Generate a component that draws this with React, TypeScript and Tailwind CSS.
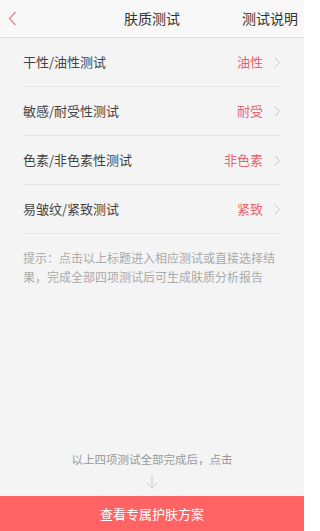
import React from "react";

const rows = [
  { label: "干性/油性测试", value: "油性" },
  { label: "敏感/耐受性测试", value: "耐受" },
  { label: "色素/非色素性测试", value: "非色素" },
  { label: "易皱纹/紧致测试", value: "紧致" },
];

function Chevron() {
  return (
    <svg width="7" height="11" viewBox="0 0 7 11" className="ml-[11px]">
      <path d="M1 1l4.5 4.5L1 10" fill="none" stroke="#c4c4c4" strokeWidth="1" />
    </svg>
  );
}

export default function App() {
  return (
    <div
      className="flex h-[531px] w-[304px] flex-col overflow-hidden bg-[#f4f4f4]"
      style={{ fontFamily: '"Noto Sans CJK SC", "Noto Sans", sans-serif' }}
    >
      <header className="relative flex h-[38px] shrink-0 items-center border-b border-[#dedede] bg-[#f8f8f8]">
        <svg width="9" height="15" viewBox="0 0 9 15" className="ml-[8px]">
          <path d="M7.5 1L1.5 7.5l6 6.5" fill="none" stroke="#e57c88" strokeWidth="1.2" />
        </svg>
        <div className="absolute left-1/2 -translate-x-1/2 text-[14px] text-[#333]">肤质测试</div>
        <div className="ml-auto pr-[6px] text-[14px] text-[#333]">测试说明</div>
      </header>

      <div className="px-[23px]">
        {rows.map((r) => (
          <div key={r.label} className="flex h-[49px] items-center border-b border-[#e6e6e6]">
            <span className="text-[13px] text-[#444]">{r.label}</span>
            <span className="ml-auto text-[13px] text-[#e8646c]">{r.value}</span>
            <Chevron />
          </div>
        ))}
        <p className="mt-[14px] text-[12px] leading-[19px] text-[#aaaaaa]">
          提示：点击以上标题进入相应测试或直接选择结果，完成全部四项测试后可生成肤质分析报告
        </p>
      </div>

      <div className="flex-1" />

      <div className="flex flex-col items-center pb-[6px]">
        <div className="text-[11.5px] text-[#999]">以上四项测试全部完成后，点击</div>
        <svg width="12" height="16" viewBox="0 0 12 16" className="mt-[6px]">
          <path d="M6 1v13M1 9l5 5 5-5" fill="none" stroke="#c8c8c8" strokeWidth="1" />
        </svg>
      </div>

      <button className="h-[35px] w-full shrink-0 bg-[#ff6363] text-[13px] text-white">查看专属护肤方案</button>
    </div>
  );
}
